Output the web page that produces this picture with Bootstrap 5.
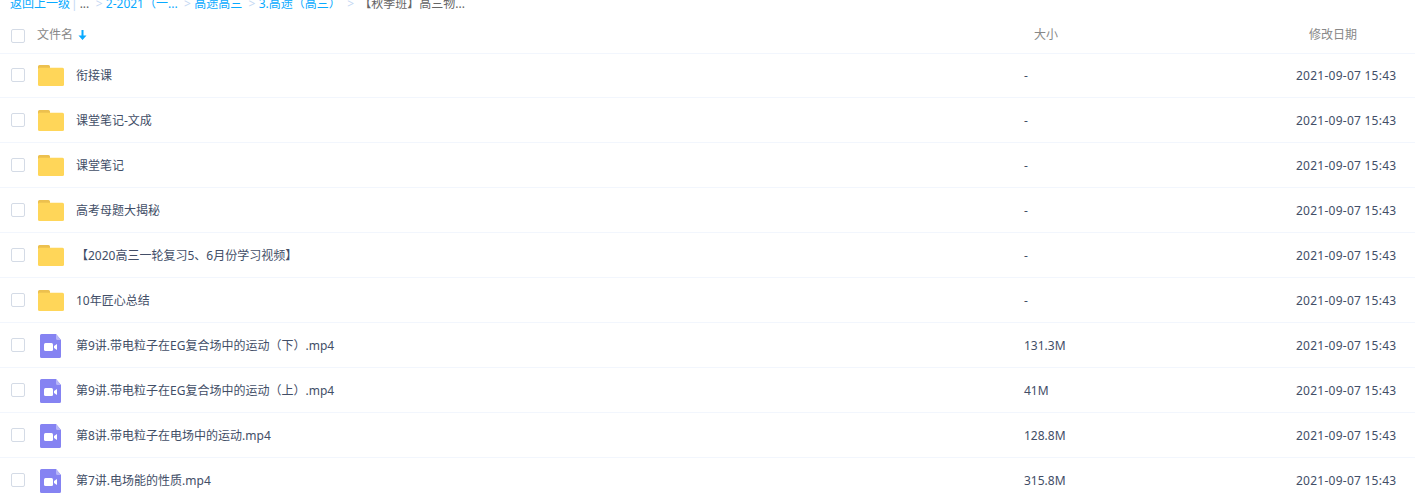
<!DOCTYPE html>
<html lang="zh">

<head>
    <meta charset="utf-8">
    <meta name="viewport" content="width=device-width, initial-scale=1">
    <title>文件列表</title>
    <link href="https://cdn.jsdelivr.net/npm/bootstrap@5.3.2/dist/css/bootstrap.min.css" rel="stylesheet">
    <style>
        html, body {
            height: 495px;
            overflow: hidden;
        }

        body {
            background-color: #fff;
            font-family: "Noto Sans", "Noto Sans CJK SC", sans-serif;
            font-size: 12px;
            color: #424e67;
        }

        .crumbs {
            height: 16px;
            margin-top: -4px;
            padding-left: 10px;
            line-height: 16px;
            white-space: nowrap;
            color: #666;
        }

        .crumbs a {
            color: #09aaff;
            text-decoration: none;
        }

        .crumb-sep {
            color: #c5d8f3;
            margin: 0 3.25px;
        }

        .crumb-last {
            margin-left: 2px;
        }

        .crumb-bar {
            color: #c4d8f4;
            margin: 0 2px 0 1px;
        }

        .head-row {
            height: 42px;
            padding-top: 4px;
            border-bottom: 1px solid #f2f6fd;
            color: #888;
        }

        #files {
            margin-top: -1px;
        }

        .file-row {
            height: 45px;
            padding-top: 2px;
            border-bottom: 1px solid #f2f6fd;
        }

        .tick {
            width: 14px;
            height: 14px;
            margin-left: 11px;
            margin-right: 12px;
            border: 1px solid #d4dbe6;
            border-radius: 2px;
            flex: none;
        }

        .head-row .tick {
            margin-top: 3px;
        }

        .file-row .tick {
            margin-bottom: 2px;
        }

        .head-name {
            width: 997px;
            flex: none;
        }

        .head-size {
            width: 275px;
            flex: none;
        }

        .file-icon {
            width: 28px;
            height: 26px;
            margin-right: 11px;
            flex: none;
        }

        .file-name {
            width: 948px;
            flex: none;
        }

        .file-size {
            width: 272px;
            flex: none;
        }

        .file-date {
            letter-spacing: .25px;
        }

        .sort-arrow {
            margin-left: 5px;
        }
    </style>
</head>

<body>
    <div class="crumbs">
        <a href="#">返回上一级</a><span class="crumb-bar">|</span><span>...</span>
        <span class="crumb-sep">&gt;</span><a href="#">2-2021（一...</a>
        <span class="crumb-sep">&gt;</span><a href="#">高途高三</a>
        <span class="crumb-sep">&gt;</span><a href="#">3.高途（高三）</a>
        <span class="crumb-sep">&gt;</span><span class="crumb-last">【秋季班】高三物...</span>
    </div>

    <div class="head-row d-flex align-items-center">
        <span class="tick"></span>
        <div class="head-name d-flex align-items-center">
            文件名
            <svg class="sort-arrow" width="9" height="10" viewBox="0 0 9 10">
                <path d="M3.500 0h2v5.500H8.500L4.500 10 .5 5.500h3z" fill="#09aaff" />
            </svg>
        </div>
        <div class="head-size">大小</div>
        <div>修改日期</div>
    </div>

    <div id="files"></div>

    <script src="https://cdn.jsdelivr.net/npm/bootstrap@5.3.2/dist/js/bootstrap.bundle.min.js"></script>
    <script>
        var folderIcon = `<svg class="file-icon" viewBox="0 0 28 26">
            <path d="M1 6V3.500A1.500 1.500 0 0 1 2.500 2h9A1.500 1.500 0 0 1 13 3.500V6z" fill="#ecc04f" />
            <rect x="1" y="4.700" width="26" height="18.300" rx="1.500" fill="#ffd659" />
        </svg>`;

        var videoIcon = `<svg class="file-icon" viewBox="0 0 28 26">
            <path d="M4.500 1H19l5 6v16.500a1.500 1.500 0 0 1-1.500 1.500h-18A1.500 1.500 0 0 1 3 23.500v-21A1.500 1.500 0 0 1 4.500 1z" fill="#8583f2" />
            <path d="M19 1l5 6h-3.500A1.500 1.500 0 0 1 19 5.500z" fill="#b6b5f7" />
            <rect x="7" y="10" width="9" height="8" rx="1.500" fill="#fff" />
            <path d="M17 13l3-2v6l-3-2z" fill="#fff" />
        </svg>`;

        var files = [
            ["folder", "衔接课", "-"],
            ["folder", "课堂笔记-文成", "-"],
            ["folder", "课堂笔记", "-"],
            ["folder", "高考母题大揭秘", "-"],
            ["folder", "【2020高三一轮复习5、6月份学习视频】", "-"],
            ["folder", "10年匠心总结", "-"],
            ["video", "第9讲.带电粒子在EG复合场中的运动（下）.mp4", "131.3M"],
            ["video", "第9讲.带电粒子在EG复合场中的运动（上）.mp4", "41M"],
            ["video", "第8讲.带电粒子在电场中的运动.mp4", "128.8M"],
            ["video", "第7讲.电场能的性质.mp4", "315.8M"]
        ];

        var store = document.querySelector("#files");
        files.forEach((f) => {
            store.innerHTML += `
            <div class="file-row d-flex align-items-center">
                <span class="tick"></span>
                ${f[0] === "folder" ? folderIcon : videoIcon}
                <div class="file-name">${f[1]}</div>
                <div class="file-size">${f[2]}</div>
                <div class="file-date">2021-09-07 15:43</div>
            </div>`;
        });
    </script>
</body>

</html>
